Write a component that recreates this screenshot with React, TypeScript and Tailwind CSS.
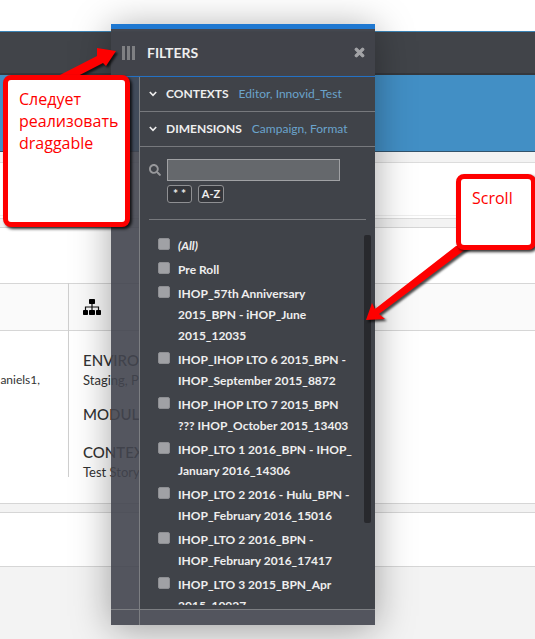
import React from "react";
import { FaSearch, FaTimes } from "react-icons/fa";

const FORMATS: string[][] = [
  ["Pre Roll"],
  ["IHOP_57th Anniversary", "2015_BPN - iHOP_June", "2015_12035"],
  ["IHOP_IHOP LTO 6 2015_BPN -", "IHOP_September 2015_8872"],
  ["IHOP_IHOP LTO 7 2015_BPN", "??? IHOP_October 2015_13403"],
  ["IHOP_LTO 1 2016_BPN - IHOP_", "January 2016_14306"],
  ["IHOP_LTO 2 2016 - Hulu_BPN -", "IHOP_February 2016_15016"],
  ["IHOP_LTO 2 2016_BPN -", "IHOP_February 2016_17417"],
  ["IHOP_LTO 3 2015_BPN_Apr", "2015_10927"],
];

function Chevron() {
  return (
    <svg width="8" height="6" viewBox="0 0 8 6" fill="none" stroke="currentColor" strokeWidth="1.6" aria-hidden="true">
      <path d="M0.8 1 L4 4.4 L7.2 1" />
    </svg>
  );
}

function SitemapIcon() {
  return (
    <svg width="18" height="16" viewBox="0 0 18 16" aria-hidden="true">
      <rect x="6" y="0" width="6" height="5" rx="0.8" />
      <rect x="0" y="11" width="5" height="5" rx="0.8" />
      <rect x="6" y="11" width="6" height="5" rx="0.8" />
      <rect x="13" y="11" width="5" height="5" rx="0.8" />
      <path d="M9 5V11M2.5 11V8H15.5V11" fill="none" stroke="#111" strokeWidth="1.2" />
    </svg>
  );
}

function Option({ lines, italic = false }: { lines: string[]; italic?: boolean }) {
  return (
    <li>
      <label className="flex items-start gap-2">
        <input
          type="checkbox"
          className="mt-[3px] size-3 shrink-0 appearance-none rounded-xs border border-[#8e8f93] bg-[#a0a1a5] checked:bg-[#1f78d1]"
        />
        <span className={italic ? "italic" : ""}>
          {lines.map((line) => (
            <span key={line} className="block whitespace-nowrap">
              {line}
            </span>
          ))}
        </span>
      </label>
    </li>
  );
}

function Section({ title, values }: { title: string; values: string }) {
  return (
    <button
      type="button"
      className="flex h-[35px] w-full items-center border-b border-[#77797d] pl-[9px] text-left text-[12px]"
    >
      <Chevron />
      <span className="ml-[9px] font-bold text-[#eeeeee]">{title}</span>
      <span className="ml-2.5 text-[#6ba3cc]">{values}</span>
    </button>
  );
}

function FilterPanel() {
  return (
    <aside className="absolute top-6 left-[111px] flex w-[264px] flex-col border-t-5 border-[#1f78d1] bg-[#41444e]/90 text-[#eeeeee] shadow-[0_4px_36px_rgba(0,0,0,0.35)]">
      <header className="flex h-12 items-center border-b border-[#2471c4] bg-[#41434a]/80 pr-[9px] pl-[11px]">
        <span className="flex gap-0.5" aria-hidden="true">
          <i className="h-3.5 w-[3px] bg-[#7f8083]" />
          <i className="h-3.5 w-[3px] bg-[#7f8083]" />
          <i className="h-3.5 w-[3px] bg-[#7f8083]" />
        </span>
        <h2 className="ml-3 grow text-[14px] font-bold">FILTERS</h2>
        <button type="button" aria-label="Close filters" className="text-[#a3a4a7]">
          <FaTimes size={13} stroke="currentColor" strokeWidth={40} />
        </button>
      </header>

      <div className="ml-7 border-l border-[#7c7e82] bg-[#404349]">
        <Section title="CONTEXTS" values="Editor, Innovid_Test" />
        <Section title="DIMENSIONS" values="Campaign, Format" />

        <div className="mx-[9px] border-b border-[#77797d] pt-3 pb-4">
          <label className="flex items-center gap-1.5">
            <FaSearch size={12} className="text-[#97989b]" aria-hidden="true" />
            <input
              type="text"
              aria-label="Search formats"
              className="h-[22px] w-[173px] border border-[#a0a1a4] bg-[#65686c] px-1 text-[12px] outline-none"
            />
          </label>
          <div className="mt-1 flex gap-1.5 pl-[18px]">
            <button type="button" className="h-[18px] w-[25px] rounded-[3px] border border-[#8f9093] bg-[#34363b] text-[12px] leading-4 font-bold">
              * *
            </button>
            <button type="button" className="h-[18px] w-[26px] rounded-[3px] border border-[#8f9093] bg-[#34363b] text-[11px] leading-4 font-bold">
              A-Z
            </button>
          </div>
        </div>

        <div className="flex h-[389px] pt-[15px] pr-1 pb-1 pl-[18px]">
          <ul className="flex h-full grow flex-col gap-[3px] overflow-hidden text-[12px] leading-[21px] font-bold">
            <Option lines={["(All)"]} italic />
            {FORMATS.map((lines) => (
              <Option key={lines.join()} lines={lines} />
            ))}
          </ul>
          <div className="h-72 w-[7px] rounded-xs bg-[#28292d]" />
        </div>
      </div>

      <footer className="h-4 border-t border-[#7c7e82]">
        <div className="ml-7 h-full border-l border-[#7c7e82]" />
      </footer>
    </aside>
  );
}

function Arrow({ className, width, height, points }: { className: string; width: number; height: number; points: string }) {
  return (
    <svg
      className={`absolute drop-shadow-[2px_2px_1px_rgba(0,0,0,0.7)] ${className}`}
      width={width}
      height={height}
      viewBox={`0 0 ${width} ${height}`}
      aria-hidden="true"
    >
      <polygon points={points} fill="#fe0000" />
    </svg>
  );
}

function Note({ className, children }: { className: string; children: React.ReactNode }) {
  return (
    <div
      className={`absolute rounded-lg border-5 border-[#fe0000] bg-white font-['Open_Sans',sans-serif] text-[16px] leading-[22px] text-[#fe0000] shadow-[2px_2px_3px_rgba(0,0,0,0.8)] ${className}`}
    >
      {children}
    </div>
  );
}

export default function App() {
  return (
    <div className="relative min-h-screen overflow-hidden bg-[#f3f3f3] font-['Lato',sans-serif] text-[#333333]">
      <div className="h-8 border-b border-[#3b84b5] bg-white" />
      <nav className="h-[43px] border-b-2 border-[#35383d] bg-[#414449]" />
      <div className="h-[77px] border-b border-[#33536b] bg-[#428fc5]" />

      <main className="flex flex-col gap-2 pt-2.5">
        <section className="h-[57px] border-y border-[#dcdcdc] bg-white">
          <div className="h-[53px] border-b border-[#eeeeee]" />
        </section>

        <section className="h-[277px] border-y border-[#d6d6d6] bg-white pt-[55px]">
          <div className="flex h-[194px]">
            <div className="w-[68px]">
              <div className="h-12 border-y border-[#d6d6d6] bg-[#fafafa]" />
              <p className="pt-[39px] pr-7 text-right text-[12px] leading-5">aniels1,</p>
            </div>
            <div className="grow border-l border-[#cfcfcf]">
              <div className="flex h-12 items-center border-y border-[#d6d6d6] bg-[#fafafa] pl-3.5">
                <SitemapIcon />
              </div>
              <div className="flex flex-col gap-3.5 pt-[19px] pl-3.5 leading-5">
                <div>
                  <h3 className="text-[15px] font-medium">ENVIRO</h3>
                  <p className="text-[13px]">Staging, P</p>
                </div>
                <h3 className="pb-1 text-[15px] font-medium">MODUL</h3>
                <div>
                  <h3 className="text-[15px] font-medium">CONTEX</h3>
                  <p className="text-[13px]">Test Story</p>
                </div>
              </div>
            </div>
          </div>
        </section>

        <section className="h-[55px] border-y border-[#d6d6d6] bg-white" />
      </main>

      <FilterPanel />

      <Arrow className="top-12 left-14" width={64} height={34} points="2,28 41,8 41,0 60,3 50,18 47,15 16,31" />
      <Note className="top-[75px] left-[3px] h-[152px] w-[127px] px-[11px] pt-2">
        Следует реализовать draggable
      </Note>

      <Arrow className="top-60 left-[364px]" width={116} height={84} points="92,6 11,69 8,63 2,80 21,79 15,74 106,6" />
      <Note className="top-[174px] left-[456px] h-[76px] w-[80px] px-[11px] pt-2">Scroll</Note>
    </div>
  );
}
